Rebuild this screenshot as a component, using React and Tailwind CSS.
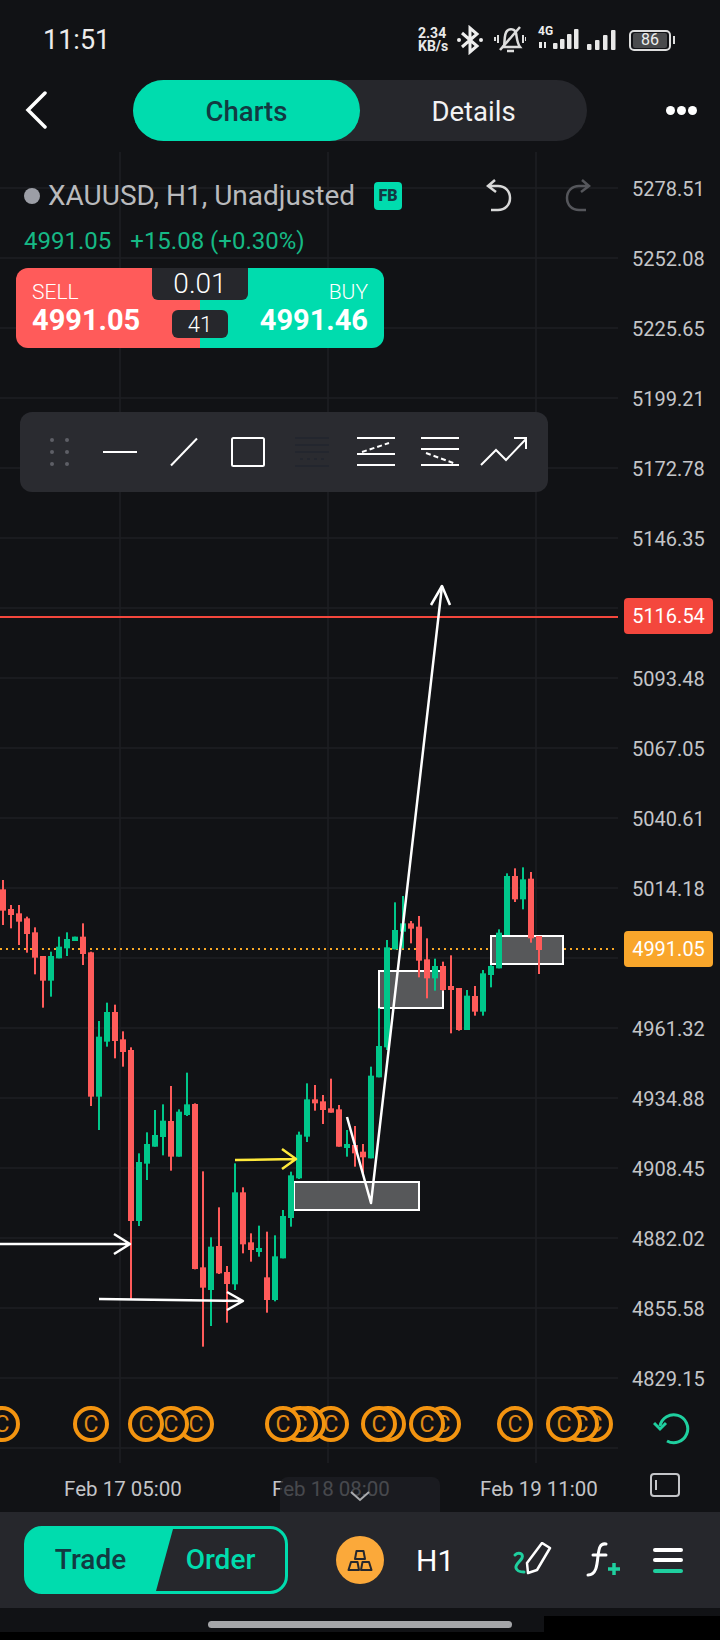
// [color, high, top, bottom, low] in 3x crop units, y = 840 + v / 3
const candles = [
  ['r', 120, 148, 212, 255], ['r', 195, 207, 225, 265], ['r', 195, 220, 245, 315], ['r', 230, 235, 282, 338],
  ['r', 262, 277, 353, 403], ['r', 348, 348, 422, 503], ['g', 335, 348, 422, 470], ['g', 290, 320, 355, 355],
  ['g', 277, 297, 325, 348], ['g', 290, 290, 303, 303], ['r', 250, 290, 342, 375], ['r', 335, 337, 770, 798],
  ['g', 543, 590, 770, 870], ['g', 488, 516, 605, 620], ['r', 494, 516, 603, 655], ['r', 574, 598, 636, 680],
  ['r', 622, 630, 1143, 1378], ['g', 940, 966, 1143, 1158], ['g', 877, 912, 971, 1020], ['g', 810, 885, 920, 920],
  ['g', 793, 842, 891, 946], ['r', 738, 843, 950, 992], ['g', 808, 815, 950, 950], ['g', 698, 793, 825, 828],
  ['r', 790, 792, 1287, 1288], ['r', 994, 1282, 1343, 1520], ['g', 1192, 1220, 1350, 1458], ['r', 1102, 1218, 1300, 1302],
  ['r', 1278, 1296, 1332, 1448], ['g', 970, 1057, 1333, 1350], ['r', 1042, 1057, 1213, 1240], ['r', 1180, 1207, 1230, 1265],
  ['g', 1157, 1224, 1236, 1250], ['r', 1175, 1312, 1380, 1418], ['g', 1186, 1249, 1380, 1384], ['g', 1110, 1128, 1255, 1255],
  ['g', 995, 1006, 1134, 1160], ['g', 875, 884, 1015, 1017], ['g', 730, 778, 890, 906], ['r', 735, 778, 790, 812],
  ['r', 765, 784, 810, 852], ['r', 716, 805, 818, 818], ['r', 795, 808, 920, 920], ['g', 870, 912, 924, 950],
  ['r', 858, 915, 940, 980], ['r', 912, 935, 952, 1000], ['g', 680, 707, 955, 955], ['g', 505, 618, 712, 712],
  ['g', 300, 322, 622, 630], ['g', 187, 270, 328, 328], ['g', 168, 250, 275, 325], ['r', 243, 250, 266, 310],
  ['r', 228, 260, 362, 412], ['r', 295, 358, 415, 475], ['g', 356, 378, 415, 452], ['r', 365, 378, 450, 452],
  ['r', 346, 438, 450, 580], ['r', 444, 444, 570, 572], ['g', 450, 467, 570, 570], ['r', 438, 468, 515, 527],
  ['g', 390, 400, 515, 527], ['g', 375, 378, 405, 442], ['g', 268, 278, 385, 385], ['g', 100, 108, 285, 285],
  ['r', 85, 108, 178, 186], ['g', 82, 118, 178, 208], ['r', 96, 116, 295, 308], ['r', 288, 288, 330, 402],
]

const prices = [
  '5278.51', '5252.08', '5225.65', '5199.21', '5172.78', '5146.35', '', '5093.48', '5067.05',
  '5040.61', '5014.18', '', '4961.32', '4934.88', '4908.45', '4882.02', '4855.58', '4829.15',
]

const coins = [2, 91, 146, 171, 196, 283, 300, 308, 331, 379, 388, 427, 443, 515, 564, 581, 595]
const gridY = Array.from({ length: 19 }, (_, i) => 188 + i * 70)
const cy = (v) => 840 + v / 3

function Chart() {
  return (
    <svg width="618" height="1311" viewBox="0 152 618 1311" className="block shrink-0">
      {[120, 328, 536].map((x) => (
        <line key={x} x1={x} x2={x} y1="152" y2="1463" stroke="#1e1f23" strokeWidth="1.5" />
      ))}
      {gridY.map((y) => (
        <line key={y} x1="0" x2="618" y1={y} y2={y} stroke="#1e1f23" strokeWidth="1.5" />
      ))}
      <line x1="0" x2="618" y1="617" y2="617" stroke="#f4473d" strokeWidth="2" />
      <line x1="0" x2="618" y1="949" y2="949" stroke="#f9a825" strokeWidth="2" strokeDasharray="2 4" />

      <g fill="#57585a" stroke="#fff" strokeWidth="2">
        <rect x="294" y="1182" width="125" height="28" />
        <rect x="379" y="971" width="64" height="37" />
        <rect x="491" y="936" width="72" height="28" />
      </g>

      {candles.map(([c, hi, top, bot, lo], i) => {
        const x = 3 + 8 * i
        const color = c === 'g' ? '#00c78a' : '#ff5b5a'
        return (
          <g key={i} fill={color}>
            <rect x={x - 1} y={cy(hi)} width="2" height={(lo - hi) / 3} />
            <rect x={x - 3} y={cy(top)} width="6" height={(bot - top) / 3} />
          </g>
        )
      })}

      <g fill="none" stroke="#fff" strokeWidth="2.5" strokeLinejoin="round">
        <path d="M347 1117L371 1203L442 586" />
        <path d="M431 605L442 586L450 605" />
        <path d="M0 1244H130M114 1234L130 1244L114 1254" />
        <path d="M99 1299L243 1301M227 1292L243 1301L227 1310" />
        <path d="M235 1160L296 1159M282 1149L296 1159L282 1169" stroke="#ffe93b" />
      </g>

      {[...coins].reverse().map((x) => (
        <g key={x}>
          <circle cx={x} cy="1424" r="16" fill="#111215" stroke="#f39410" strokeWidth="4" />
          <text x={x} y="1432" textAnchor="middle" fontSize="23" fill="#e08a15">C</text>
        </g>
      ))}
    </svg>
  )
}

function Tool({ children, className = 'w-[64px]' }) {
  return <div className={`${className} flex justify-center`}>{children}</div>
}

function ToolIcon({ children, stroke = '#fff' }) {
  return (
    <svg width="40" height="32" viewBox="0 0 40 32" fill="none" stroke={stroke} strokeWidth="2">
      {children}
    </svg>
  )
}

function Toolbar() {
  return (
    <div className="absolute left-[20px] top-[260px] flex h-[80px] w-[528px] items-center rounded-[12px] bg-[#2a2b30] pl-[12px]">
      <Tool className="w-[56px]">
        <svg width="20" height="30" viewBox="0 0 20 30" fill="#5e5f66">
          {[3, 15, 27].map((y) => (
            <g key={y}>
              <circle cx="2" cy={y} r="2" />
              <circle cx="17" cy={y} r="2" />
            </g>
          ))}
        </svg>
      </Tool>
      <Tool><ToolIcon><path d="M3 16H37" /></ToolIcon></Tool>
      <Tool><ToolIcon><path d="M7 29.5L33 2.5" /></ToolIcon></Tool>
      <Tool><ToolIcon><rect x="4" y="2" width="32" height="28" rx="1.5" /></ToolIcon></Tool>
      <Tool>
        <ToolIcon stroke="#23262e">
          <path d="M3 2H37M3 9H37M3 16H37M3 30H37" />
          <path d="M8 23H34" strokeDasharray="3 4" />
        </ToolIcon>
      </Tool>
      <Tool>
        <ToolIcon>
          <path d="M1 2H39M1 18H39M1 29H39" />
          <path d="M6 16L33 7" strokeDasharray="5 3" />
        </ToolIcon>
      </Tool>
      <Tool>
        <ToolIcon>
          <path d="M1 2H39M1 13H39M1 29H39" />
          <path d="M6 17L36 28" strokeDasharray="5 3" />
        </ToolIcon>
      </Tool>
      <Tool>
        <svg width="48" height="32" viewBox="0 0 48 32" fill="none" stroke="#fff" strokeWidth="2">
          <path d="M1 29L16 14L26 24L46 3M34 2H46V13" />
        </svg>
      </Tool>
    </div>
  )
}

function TicketPanel() {
  return (
    <div className="relative mt-[12px] flex h-[80px] w-[368px] overflow-hidden rounded-[12px]">
      <div className="flex w-[184px] flex-col bg-[#ff5b5a] pl-[16px] pt-[12px] text-white">
        <span className="text-[21px] leading-[24px] font-light">SELL</span>
        <span className="text-[29px] leading-[32px] font-bold">4991.05</span>
      </div>
      <div className="flex w-[184px] flex-col items-end bg-[#00dcae] pr-[16px] pt-[12px] text-white">
        <span className="text-[21px] leading-[24px] font-light">BUY</span>
        <span className="text-[29px] leading-[32px] font-bold">4991.46</span>
      </div>
      <div className="absolute left-[136px] top-0 flex h-[32px] w-[96px] items-center justify-center rounded-b-[6px] bg-[#26272c] text-[28px] font-light text-white">
        0.01
      </div>
      <div className="absolute left-[156px] top-[42px] flex h-[28px] w-[56px] items-center justify-center rounded-[6px] bg-[#26272c] text-[22px] font-light text-white">
        41
      </div>
    </div>
  )
}

function StatusBar() {
  return (
    <div className="flex h-[80px] items-center pl-[43px] text-white">
      <span className="w-[375px] text-[27px] text-[#ececec]">11:51</span>
      <div className="flex w-[32px] flex-col text-[14px] leading-[13px] font-bold text-[#e8e8e8]">
        <span>2.34</span>
        <span>KB/s</span>
      </div>
      <svg width="26" height="30" viewBox="0 0 26 30" fill="none" stroke="#eee" strokeWidth="3" className="ml-[7px]">
        <path d="M5 8L20 21L13 27V3L20 9L5 22" />
        <circle cx="2" cy="15" r="2" fill="#eee" stroke="none" />
        <circle cx="24" cy="15" r="2" fill="#eee" stroke="none" />
      </svg>
      <svg width="32" height="30" viewBox="0 0 32 30" fill="none" stroke="#ddd" strokeWidth="2.5" className="ml-[11px]">
        <path d="M10 21C11 16 10 9 13 6C16 3 21 4 22 8C23 13 23 18 26 22H8" />
        <path d="M6 25L26 2" />
        <path d="M13 26H20" />
        <path d="M4 10V18M1 12V16M29 10V18M32 12V16" strokeWidth="2" />
      </svg>
      <div className="relative ml-[12px] h-[30px] w-[44px]">
        <span className="absolute left-0 top-[-1px] text-[12px] leading-[14px] font-bold text-[#eee]">4G</span>
        <svg width="44" height="30" viewBox="0 0 44 30" fill="#e8e8e8" className="absolute left-0 top-0">
          <path d="M1 17H4V23H1ZM6 17H8V23H6Z" />
          <rect x="15" y="18" width="4.5" height="6" rx="1" />
          <rect x="22" y="14" width="4.5" height="10" rx="1" />
          <rect x="29" y="9" width="4.5" height="15" rx="1" />
          <rect x="36" y="4" width="4.5" height="20" rx="1" />
        </svg>
      </div>
      <svg width="33" height="22" viewBox="0 0 33 22" fill="#e8e8e8" className="ml-[5px] mb-[1px]">
        <rect x="0" y="15" width="4.5" height="6" rx="1" />
        <rect x="8" y="11" width="4.5" height="10" rx="1" />
        <rect x="16" y="6" width="4.5" height="15" rx="1" />
        <rect x="24" y="1" width="4.5" height="20" rx="1" />
      </svg>
      <div className="ml-[9px] flex h-[21px] w-[42px] items-center justify-center rounded-[5px] border-2 border-[#ddd] p-[1px]">
        <span className="flex h-full w-[34px] items-center justify-center rounded-[2px] bg-[#4a4b4d] text-[16px] text-[#eee]">86</span>
      </div>
      <div className="ml-[2px] h-[8px] w-[2px] bg-[#ddd]" />
    </div>
  )
}

function TabsRow() {
  return (
    <div className="flex h-[61px] items-center">
      <svg width="22" height="38" viewBox="0 0 22 38" fill="none" stroke="#fff" strokeWidth="3.5" strokeLinecap="round" className="mb-[2px] ml-[25px]">
        <path d="M20 2L3 19L20 36" />
      </svg>
      <div className="ml-[86px] flex h-[61px] w-[454px] rounded-full bg-[#26272c] text-[27.5px]">
        <div className="flex w-[227px] items-center justify-center rounded-full bg-[#00dcae] pt-[3px] font-medium text-[#123a42]">Charts</div>
        <div className="flex w-[227px] items-center justify-center pt-[3px] text-[#f2f2f2]">Details</div>
      </div>
      <div className="ml-[79px] flex gap-[2px]">
        <span className="h-[9px] w-[9px] rounded-full bg-white" />
        <span className="h-[9px] w-[9px] rounded-full bg-white" />
        <span className="h-[9px] w-[9px] rounded-full bg-white" />
      </div>
    </div>
  )
}

function PriceAxis() {
  return (
    <div className="flex flex-1 flex-col pl-[14px] pt-[2px] text-[20px] text-[#c4c5c8]">
      {prices.map((p, i) => (
        <div key={i} className="flex h-[70px] items-center">{p}</div>
      ))}
      <svg width="38" height="34" viewBox="0 0 38 34" fill="none" stroke="#1fcf9f" strokeWidth="3" className="ml-[21px] mt-[-3px]">
        <path d="M14 30A14 14 0 1 0 7 15" />
        <path d="M1 12L7 18L13 12" />
      </svg>
    </div>
  )
}

function BottomBar() {
  return (
    <div className="flex h-[96px] items-center bg-[#26272c]">
      <div className="ml-[24px] flex h-[68px] w-[264px] overflow-hidden rounded-[18px] border-[3px] border-[#00dcae] bg-[#00dcae] text-[28px]">
        <div className="flex w-[129px] items-center justify-center pr-[2px] font-medium text-[#123a42]">Trade</div>
        <div className="flex w-[129px] items-center justify-center bg-[#26272c] font-medium text-[#00dcae] [clip-path:polygon(17px_0,100%_0,100%_100%,0_100%)]">Order</div>
      </div>
      <div className="ml-[48px] flex h-[48px] w-[48px] items-center justify-center rounded-full bg-[#fba93a]">
        <svg width="26" height="23" viewBox="0 0 26 23" fill="none" stroke="#26272c" strokeWidth="2" strokeLinejoin="round">
          <path d="M9.5 2H16.5L18 10H8Z" />
          <path d="M4 13H10.5L12 21H1.5Z" />
          <path d="M15.5 13H22L24.5 21H14Z" />
        </svg>
      </div>
      <span className="ml-[32px] w-[37px] text-[30px] text-white">H1</span>
      <svg width="42" height="36" viewBox="0 0 42 36" fill="none" strokeWidth="3" className="ml-[59px]">
        <path d="M3 13C6 10 12 11 10 16C8 20 3 22 4 26C5 30 9 30 12 30" stroke="#1fcf9f" strokeLinecap="round" />
        <path d="M15 21L30 1L38 6L25 28L16 31Z" stroke="#fff" strokeLinejoin="round" strokeWidth="2.5" />
      </svg>
      <svg width="36" height="36" viewBox="0 0 36 36" fill="none" strokeWidth="3" strokeLinecap="round" className="ml-[32px]">
        <path d="M20 2C14 1 13 6 12 14C11 24 10 33 2 33" stroke="#fff" />
        <path d="M7 13H20" stroke="#fff" />
        <path d="M22 27H34M28 21V33" stroke="#1fcf9f" strokeWidth="3.5" strokeLinecap="butt" />
      </svg>
      <div className="ml-[31px] flex w-[30px] flex-col gap-[6.5px]">
        <span className="h-[4px] rounded-full bg-white" />
        <span className="h-[4px] rounded-full bg-white" />
        <span className="h-[4px] rounded-full bg-[#1fcf9f]" />
      </div>
    </div>
  )
}

export default function App() {
  return (
    <div className="flex h-[1640px] w-[720px] flex-col overflow-hidden bg-black font-['Roboto',sans-serif]">
      <div className="bg-[#111215]">
        <StatusBar />
        <TabsRow />
        <div className="h-[11px]" />

        {/* chart + overlays */}
        <div className="relative flex h-[1311px]">
          <Chart />
          <PriceAxis />

          <div className="absolute left-[16px] top-[26px]">
            <div className="flex h-[36px] items-center pl-[8px]">
              <span className="h-[16px] w-[16px] rounded-full bg-[#9c9ea6]" />
              <span className="ml-[8px] text-[28px] text-[#b9babd]">XAUUSD, H1, Unadjusted</span>
              <span className="ml-[19px] flex h-[28px] w-[28px] items-center justify-center rounded-[4px] bg-[#00dcae] text-[16px] font-black text-[#123a42]">FB</span>
            </div>
            <div className="mt-[12px] flex h-[30px] items-center gap-[19px] pl-[8px] text-[24px] text-[#16b985]">
              <span>4991.05</span>
              <span>+15.08 (+0.30%)</span>
            </div>
            <TicketPanel />
          </div>

          <svg width="28" height="34" viewBox="0 0 28 34" fill="none" stroke="#d8d8d8" strokeWidth="2.5" className="absolute left-[485px] top-[27px]">
            <path d="M10 1L3 7L11 13M3 7H13C20 7 25 12 25 19C25 26 20 31 13 31H6" />
          </svg>
          <svg width="28" height="34" viewBox="0 0 28 34" fill="none" stroke="#55565b" strokeWidth="2.5" className="absolute left-[564px] top-[27px]">
            <path d="M18 1L25 7L17 13M25 7H15C8 7 3 12 3 19C3 26 8 31 15 31H22" />
          </svg>

          <Toolbar />

          <div className="absolute left-[624px] top-[446px] flex h-[36px] w-[89px] items-center justify-center rounded-[4px] bg-[#f4473d] text-[20px] text-white">5116.54</div>
          <div className="absolute left-[624px] top-[779px] flex h-[36px] w-[89px] items-center justify-center rounded-[4px] bg-[#f9a62b] text-[20px] text-white">4991.05</div>
        </div>

        {/* time axis */}
        <div className="relative flex h-[49px] items-center pl-[19px] pt-[3px] text-[20.5px] text-[#c4c5c8]">
          <span className="w-[208px] text-center">Feb 17 05:00</span>
          <span className="w-[208px] text-center">Feb 18 08:00</span>
          <span className="w-[208px] text-center">Feb 19 11:00</span>
          <span className="mb-[9px] ml-[7px] flex h-[24px] w-[30px] items-center rounded-[4px] border-2 border-[#c4c5c8] pl-[3px]">
            <span className="h-[10px] w-[2px] bg-[#c4c5c8]" />
          </span>
          <div className="absolute left-[280px] top-[14px] flex h-[35px] w-[160px] justify-center rounded-t-[8px] bg-[#1e1f24]/75 pt-[14px]">
            <svg width="22" height="11" viewBox="0 0 22 11" fill="none" stroke="#a9aaad" strokeWidth="2">
              <path d="M2 1L11 9L20 1" />
            </svg>
          </div>
        </div>

        <BottomBar />
      </div>

      {/* gesture area */}
      <div className="flex">
        <div className="h-[24px] w-[544px] bg-[#111215] pl-[208px] pt-[13px]">
          <div className="h-[7px] w-[304px] rounded-full bg-[#a5a6a9]" />
        </div>
        <div className="h-[8px] flex-1 bg-[#111215]" />
      </div>
    </div>
  )
}
